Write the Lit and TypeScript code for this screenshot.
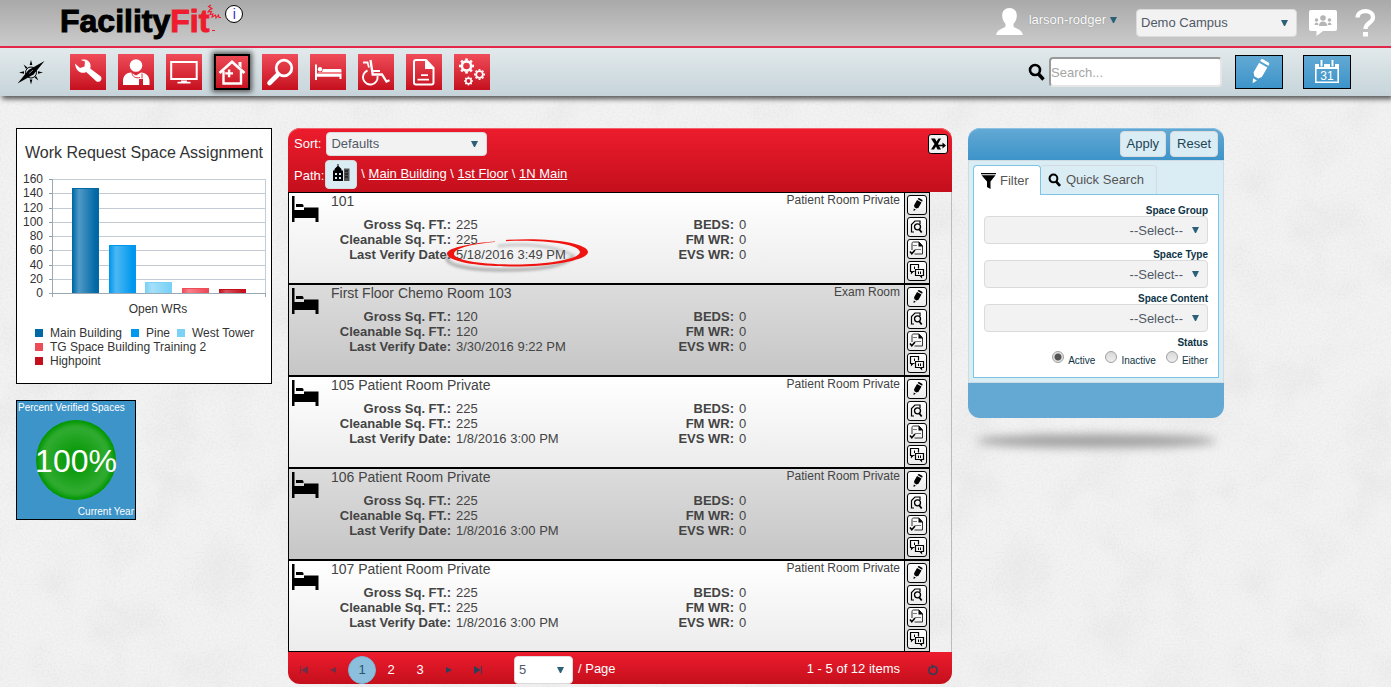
import { LitElement, html, svg, css } from "lit";
import { customElement, property, state } from "lit/decorators.js";
import { classMap } from "lit/directives/class-map.js";

interface Space {
  name: string;
  kind: string;
  sqft: number;
  verified: string;
  marked?: boolean;
}

const SPACES: Space[] = [
  { name: "101", kind: "Patient Room Private", sqft: 225, verified: "5/18/2016 3:49 PM", marked: true },
  { name: "First Floor Chemo Room 103", kind: "Exam Room", sqft: 120, verified: "3/30/2016 9:22 PM" },
  { name: "105 Patient Room Private", kind: "Patient Room Private", sqft: 225, verified: "1/8/2016 3:00 PM" },
  { name: "106 Patient Room Private", kind: "Patient Room Private", sqft: 225, verified: "1/8/2016 3:00 PM" },
  { name: "107 Patient Room Private", kind: "Patient Room Private", sqft: 225, verified: "1/8/2016 3:00 PM" },
];

const SERIES = [
  { name: "Main Building", value: 147, color: "#0069a5", light: "#4f99c6", lx: 18, ly: 208 },
  { name: "Pine", value: 67, color: "#0098ee", light: "#4db7f4", lx: 114, ly: 208 },
  { name: "West Tower", value: 15, color: "#7bd2f6", light: "#a6e0f9", lx: 160, ly: 208 },
  { name: "TG Space Building Training 2", value: 7, color: "#ef4c5a", light: "#f68089", lx: 18, ly: 222 },
  { name: "Highpoint", value: 5, color: "#c4101d", light: "#d5525c", lx: 18, ly: 236 },
];

const pencil = (color: string) => svg`
  <g transform="rotate(30 12 12)" fill=${color}>
    <path d="M9 -1h6.500q1.500 0 1.500 1.500v1.500H7.500v-1.500Q7.500 -1 9 -1z M7.500 4h9.500v11l-2.500 3h-4.500l-2.500-3z M10 20.500h4.500l-2.300 4.500z"/>
  </g>`;

const wrench = svg`<path fill="#fff" d="M5 9.500l5 4.500 4.500-1.500.5-5-4-1.500c4-1.500 9 .5 9.500 5 .2 1.500 0 2.500-.3 3.500l10 7.500c2 1.500 1.500 4-.2 5.300-1.500 1-3.500.7-4.800-1l-9-8.300c-4.500 2.500-10.500-.5-11.200-8.500z"/>`;

const person = svg`
  <circle cx="18" cy="11.500" r="6.300" fill="#fff"/>
  <path fill="#fff" d="M5 31v-4c0-5 3-8 8-8.500l5 3 5-3c5 .5 8.500 3.500 8.500 8.500v4h-6.500v-6h-4v6z"/>
  <path d="M14 19c.5 4 4 5.500 8 4.500m2-4v5" fill="none" stroke="#e1303e" stroke-width="1"/>`;

const monitor = svg`
  <rect x="5.200" y="8" width="25.500" height="17" fill="none" stroke="#fff" stroke-width="2"/>
  <path fill="#fff" d="M15 26.500h6v1.200h3.500v1.800h-13v-1.800H15z"/>`;

const house = svg`
  <path fill="none" stroke="#fff" stroke-width="2.400" stroke-linejoin="miter" d="M9.500 17v12.500h17.500V17"/>
  <path fill="none" stroke="#fff" stroke-width="2.800" d="M5.500 19L18 7.800 30.500 19"/>
  <path fill="#fff" d="M24.500 8h3v6l-3-2.500zM13.900 15.500h2.400v2.700H19v2.400h-2.700v2.700h-2.400v-2.700h-2.700v-2.400h2.700z"/>`;

const magnifier = svg`
  <circle cx="22" cy="14" r="7.800" fill="none" stroke="#fff" stroke-width="2.800"/>
  <path d="M16 20.500L7.500 29" stroke="#fff" stroke-width="4.600" stroke-linecap="round"/>`;

const bedLine = svg`
  <path fill="#fff" d="M5 10.500h2v9h24.500V25h-2v-2.200H7V26H5z"/>
  <circle cx="10" cy="15.200" r="2.200" fill="#fff"/>
  <path fill="#fff" d="M13 15h17c1 0 1.500.5 1.500 1.500v1.500H12z"/>
  <path fill="#f48088" d="M8 18h23.500v1.500H8z"/>`;

const wheelchair = svg`
  <path fill="none" stroke="#fff" stroke-width="2.300" d="M12.500 6l2.200 14.500H24l4.500 7 3-1.200"/>
  <path fill="none" stroke="#fff" stroke-width="1.800" d="M5 8.500h4.500l1.500 5M15 17h7"/>
  <path fill="none" stroke="#fff" stroke-width="1.900" d="M9.500 16.500a7.300 7.300 0 1 0 10 5.500"/>`;

const documentIcon = svg`
  <path fill="none" stroke="#fff" stroke-width="2" stroke-linejoin="round" d="M10 6h10l7.500 8v14.500a2 2 0 0 1-2 2H10a2 2 0 0 1-2-2V8a2 2 0 0 1 2-2z"/>
  <path fill="#fff" d="M19 5.500l9 9.500h-9z"/>
  <path stroke="#fff" stroke-width="1.700" d="M15 21.200h7M11.500 25.700H23"/>`;

const gear = (cx: number, cy: number, r: number, w: number) => svg`
  <circle cx=${cx} cy=${cy} r=${r} fill="none" stroke="#fff" stroke-width=${w}/>
  ${[0, 45, 90, 135, 180, 225, 270, 315].map(
    (a) => svg`<path transform="rotate(${a} ${cx} ${cy})" stroke="#fff" stroke-width=${w} d="M${cx} ${cy - r - w / 2 + 0.3}v${-w * 0.75}"/>`
  )}`;

const gears = svg`${gear(12.5, 12, 4.6, 2.6)}${gear(25.5, 20.5, 3.4, 1.9)}${gear(14.5, 27, 2.7, 1.6)}`;

const MENU = [
  { label: "Work requests", icon: wrench },
  { label: "Staff", icon: person },
  { label: "Equipment", icon: monitor },
  { label: "Spaces", icon: house },
  { label: "Inspections", icon: magnifier },
  { label: "Beds", icon: bedLine },
  { label: "Patient transport", icon: wheelchair },
  { label: "Reports", icon: documentIcon },
  { label: "Settings", icon: gears },
];

const ROW_ACTIONS = [
  { label: "Edit", icon: svg`<g transform="translate(3.500 3.500) scale(.54)">${pencil("#000")}</g>` },
  {
    label: "View",
    icon: svg`
      <path fill="none" stroke="#000" stroke-width="1.200" d="M7 15H4.500V7.500L8 4h5v3"/>
      <circle cx="10.500" cy="9.800" r="3" fill="none" stroke="#000" stroke-width="1.300"/>
      <path stroke="#000" stroke-width="1.800" d="M12 12l2.700 3.500"/>`,
  },
  {
    label: "Inspect",
    icon: svg`
      <path fill="none" stroke="#333" stroke-width="1" d="M5 11V4.500c0-1 .5-1.500 1.500-1.500H12l3.500 3.500V15h-8"/>
      <path fill="#000" d="M11.500 2.500L16 7.500h-4.500z"/>
      <path stroke="#777" stroke-width="1" d="M6 6.500h4M8 10.500h6"/>
      <path fill="none" stroke="#000" stroke-width="1.600" d="M3 12.500l1.800 2.200L8 11"/>`,
  },
  {
    label: "Compare",
    icon: svg`
      <path fill="none" stroke="#000" stroke-width="1.200" d="M7.500 10.500H6L4.500 12v-1.500h-1v-7h8v4"/>
      <path fill="none" stroke="#000" stroke-width="1.200" d="M8.500 8.500h8v6h-2V16l-1.500-1.500H8.500z"/>
      <path stroke="#000" stroke-width="1" d="M7.500 5.500v2.500M11.500 10.500v2.500M13.500 10.500v2.500"/>`,
  },
];

const searchGlyph = (size: number) => html`
  <svg width=${size} height=${size} viewBox="0 0 18 18" aria-hidden="true">
    <circle cx="7" cy="7" r="5" fill="none" stroke="#000" stroke-width="2.600" />
    <path d="M10.500 11l5 5.500" stroke="#000" stroke-width="3.400" />
  </svg>`;

@customElement("space-row")
class SpaceRow extends LitElement {
  @property({ attribute: false }) space!: Space;
  @property({ type: Boolean, reflect: true }) alt = false;

  static styles = css`
    :host {
      display: flex;
      box-sizing: border-box;
      border: 1px solid #000;
      background: linear-gradient(#fff, #ececec);
      color: #444;
      font-size: 13px;
      line-height: 15px;
    }
    :host([alt]) {
      background: linear-gradient(#dcdcdc, #c6c6c6);
    }
    .bed {
      flex: none;
      margin: 3px 12px 0 2px;
    }
    .info {
      flex: 1;
      min-width: 0;
    }
    .head {
      display: flex;
      justify-content: space-between;
      height: 24px;
      padding-right: 4px;
    }
    .name {
      font-size: 14px;
      line-height: 16px;
    }
    .kind {
      font-size: 12px;
      line-height: 14px;
    }
    .stats {
      display: grid;
      grid-template-columns: 120px 1fr 90px 165px;
      column-gap: 5px;
    }
    .key {
      font-weight: bold;
      text-align: right;
      white-space: nowrap;
    }
    .marked {
      position: relative;
    }
    .mark {
      position: absolute;
      left: -14px;
      top: -10px;
      pointer-events: none;
    }
    .actions {
      display: flex;
      flex-direction: column;
      gap: 2px;
      padding: 2px;
      border-left: 1px solid #000;
      background: #dedede;
    }
    button {
      width: 20px;
      height: 20px;
      padding: 0;
      border: 1px solid #000;
      border-radius: 3px;
      background: linear-gradient(#fff, #ececec);
    }
    button svg {
      display: block;
      margin: -1px;
    }
  `;

  render() {
    const s = this.space;
    return html`
      <svg class="bed" width="28" height="28" viewBox="0 0 28 28" aria-hidden="true">
        <path d="M1 0h2.500v14H13v-2.500h14.500V26h-3v-4H3.500v4H1z M5 8h6q1.500 0 1.500 1.500V11H5z" />
      </svg>
      <div class="info">
        <div class="head"><span class="name">${s.name}</span><span class="kind">${s.kind}</span></div>
        <div class="stats">
          <span class="key">Gross Sq. FT.:</span><span>${s.sqft}</span>
          <span class="key">BEDS:</span><span>0</span>
          <span class="key">Cleanable Sq. FT.:</span><span>${s.sqft}</span>
          <span class="key">FM WR:</span><span>0</span>
          <span class="key">Last Verify Date:</span>
          <span class=${classMap({ marked: !!s.marked })}>
            ${s.verified}
            ${s.marked
              ? html`<svg class="mark" width="152" height="40" viewBox="0 0 152 40" aria-hidden="true">
                  <defs><filter id="soft" x="-10%" y="-30%" width="120%" height="160%"><feGaussianBlur stdDeviation="1.600" /></filter></defs>
                  <path d="M6 19C0 27 22 33 62 33c42 0 64-5 70-15" fill="none" stroke="#777" stroke-opacity=".6" stroke-width="3" filter="url(#soft)" />
                  <path d="M56 9c28-3 58 0 74 9" fill="none" stroke="#777" stroke-opacity=".5" stroke-width="2" filter="url(#soft)" />
                  <path fill="#f01410" d="M53 4.500C32 6 6 10 5 16.500c0 8 30 13 67 13 42 0 74-7 74-14.500C146 6 106 0 64 3l0 1.200C101 2.500 137 7 138 15c0 7-32 12.500-65 12.500C38 27.500 12 23 12 17c0-6 21-10.500 41-12z" />
                </svg>`
              : null}
          </span>
          <span class="key">EVS WR:</span><span>0</span>
        </div>
      </div>
      <div class="actions">
        ${ROW_ACTIONS.map(
          (a) => html`<button aria-label="${a.label} ${s.name}"><svg width="20" height="20" viewBox="0 0 20 20">${a.icon}</svg></button>`
        )}
      </div>
    `;
  }
}

@customElement("app-root")
class AppRoot extends LitElement {
  @state() private page = 1;

  static styles = css`
    :host {
      display: block;
      box-sizing: border-box;
      min-height: 100vh;
      font-family: "Liberation Sans", Arial, sans-serif;
      font-size: 13px;
      line-height: 16px;
      color: #444;
      background-color: #f3f3f3;
      background-image: url("data:image/svg+xml,%3Csvg xmlns='http://www.w3.org/2000/svg' width='400' height='400'%3E%3Cfilter id='n' x='0' y='0' width='100%25' height='100%25'%3E%3CfeTurbulence type='fractalNoise' baseFrequency='.5' numOctaves='2' stitchTiles='stitch'/%3E%3CfeColorMatrix values='0 0 0 0 .4 0 0 0 0 .4 0 0 0 0 .4 .22 0 0 0 -.08'/%3E%3C/filter%3E%3Cfilter id='m' x='0' y='0' width='100%25' height='100%25'%3E%3CfeTurbulence type='fractalNoise' baseFrequency='.02' numOctaves='3' seed='4' stitchTiles='stitch'/%3E%3CfeColorMatrix values='0 0 0 0 .4 0 0 0 0 .4 0 0 0 0 .4 .2 0 0 0 -.08'/%3E%3C/filter%3E%3Crect width='400' height='400' filter='url(%23m)'/%3E%3Crect width='400' height='400' filter='url(%23n)'/%3E%3C/svg%3E");
    }
    button,
    select,
    input {
      font: inherit;
    }
    svg {
      display: block;
      flex: none;
    }
    .top {
      display: flex;
      align-items: center;
      height: 46px;
      padding: 0 15px 0 60px;
      border-bottom: 2px solid #ee2549;
      background: linear-gradient(#a9a9a9, #cbcbcb);
    }
    .logo {
      align-self: flex-start;
      display: flex;
      margin-top: 2px;
      color: #000;
      font-size: 32px;
      font-weight: bold;
      line-height: 38px;
      text-decoration: none;
      -webkit-text-stroke: 1px currentColor;
    }
    .fit {
      color: #ee1c2e;
    }
    .squiggle {
      align-self: flex-start;
      margin: 4px 4px 0 -2px;
    }
    .about {
      align-self: flex-start;
      box-sizing: border-box;
      width: 18px;
      height: 18px;
      margin-top: 5px;
      padding: 0;
      border: 1px solid #000;
      border-radius: 50%;
      background: #fff;
      color: #3a2bd0;
      font-size: 14px;
      line-height: 14px;
    }
    .account {
      display: flex;
      align-items: center;
      margin-left: auto;
    }
    .avatar {
      margin-bottom: 4px;
    }
    .user {
      display: flex;
      align-items: center;
      gap: 4px;
      margin: 0 19px 6px 6px;
      padding: 0;
      border: 0;
      background: none;
      color: #fff;
      text-shadow: 0 0 1px #777;
    }
    .icon-link {
      display: block;
      margin-left: 12px;
    }
    .drop {
      box-sizing: border-box;
      appearance: none;
      height: 28px;
      margin: 0;
      padding: 0 4px;
      border: 1px solid #dbdbde;
      border-radius: 4px;
      color: #515967;
      font-weight: normal;
      background: #f2f2f2 url("data:image/svg+xml,%3Csvg xmlns='http://www.w3.org/2000/svg' width='7' height='6'%3E%3Cpath d='M0 0h7l-3 6h-1z' fill='%232a6078'/%3E%3C/svg%3E") no-repeat right 8px center;
    }
    .campus {
      width: 161px;
    }
    .bar {
      position: relative;
      display: flex;
      align-items: center;
      height: 48px;
      padding: 0 40px 0 17px;
      background: linear-gradient(#e2e9eb, #c6d4da);
      box-shadow: 2px 3px 5px #555;
    }
    .menu {
      display: flex;
      gap: 12px;
      margin: 0 auto 0 25px;
    }
    .tile {
      box-sizing: border-box;
      width: 36px;
      height: 36px;
      padding: 0;
      border: 0;
      background: linear-gradient(#f04c59, #c5101e);
    }
    .tile.current {
      outline: 2px solid #000;
      outline-offset: -2px;
      box-shadow: 0 0 5px 2px #555;
    }
    .search {
      display: flex;
      align-items: center;
      gap: 3px;
      margin-right: 13px;
    }
    .search input {
      box-sizing: border-box;
      width: 173px;
      height: 30px;
      padding: 0;
      border: 2px solid;
      border-color: #999 #e6e6e6 #e6e6e6 #999;
      border-radius: 4px;
      background: #fff;
    }
    .search input::placeholder {
      color: #a5a5a5;
    }
    .tool {
      display: grid;
      place-items: center;
      width: 48px;
      height: 34px;
      padding: 0;
      border: 1px solid #000;
      background: linear-gradient(#62a9d4, #3d94c9);
    }
    .tool + .tool {
      margin-left: 20px;
    }
    .tool svg {
      overflow: visible;
    }
    .cal-day {
      font-size: 12px;
      fill: #fff;
    }
    main {
      display: grid;
      grid-template-columns: 256px minmax(560px, 664px) 256px;
      align-items: start;
      gap: 16px;
      padding: 32px 16px 3px;
    }
    .side {
      display: grid;
      justify-items: start;
      gap: 16px;
    }
    .chart {
      box-sizing: border-box;
      width: 256px;
      border: 1px solid #000;
      background: #fff;
      fill: #333;
      font-size: 12px;
    }
    .chart-title {
      font-size: 16px;
    }
    .gauge {
      box-sizing: border-box;
      display: flex;
      flex-direction: column;
      justify-content: space-between;
      width: 120px;
      height: 120px;
      padding: 1px;
      border: 1px solid #000;
      background: #3d94c9;
      color: #fff;
      font-size: 10px;
      line-height: 12px;
    }
    .ball {
      align-self: center;
      width: 80px;
      height: 80px;
      border-radius: 50%;
      background: radial-gradient(circle, #0f9c0f 20%, #2fab2f 55%, #2aa82a 60%, #009600 70%);
      font-size: 32px;
      line-height: 82px;
      display: flex;
      justify-content: center;
    }
    .gauge-foot {
      text-align: right;
    }
    .panel {
      border-radius: 12px;
      box-shadow: inset -1px 0 #bbb;
    }
    .panel-head {
      display: flex;
      justify-content: space-between;
      box-sizing: border-box;
      height: 64px;
      padding: 4px 4px 3px 6px;
      border-radius: 12px 12px 0 0;
      background: linear-gradient(#ed1c2d, #c40f1c);
      box-shadow: inset 0 1px #f3606b;
      color: #fff;
    }
    .sort,
    .path {
      display: flex;
      align-items: center;
    }
    .sort {
      gap: 5px;
      margin-bottom: 4px;
    }
    .sort .drop {
      width: 161px;
      height: 24px;
    }
    .path-label {
      align-self: flex-end;
      line-height: 26px;
    }
    .root {
      display: grid;
      place-items: center;
      width: 32px;
      height: 29px;
      margin: 0 4px 0 1px;
      padding: 0 0 4px;
      border: 1px solid #dbdbde;
      border-radius: 4px;
      background: #daecf4;
    }
    .path a {
      color: #fff;
    }
    .crumbs {
      padding-bottom: 2px;
    }
    .export {
      width: 20px;
      height: 20px;
      margin-top: 2px;
      padding: 0;
      border: 1px solid #000;
      border-radius: 3px;
      background: #f2f2f2;
    }
    .rows {
      display: grid;
      margin-right: 22px;
    }
    .pager {
      display: flex;
      align-items: center;
      box-sizing: border-box;
      height: 32px;
      padding: 2px 12px 0 2px;
      border-radius: 0 0 12px 12px;
      background: linear-gradient(#ed1c2d, #c40f1c);
      color: #fff;
    }
    .pages {
      display: flex;
      gap: 1px;
      margin: 2px 22px 0 0;
    }
    .page {
      display: grid;
      place-items: center;
      width: 28px;
      height: 28px;
      padding: 0;
      border: 0;
      border-radius: 50%;
      background: none;
      color: #fff;
    }
    .page.on {
      border: 1px solid #79b4d4;
      background: #8cbfdd;
      color: #28566c;
    }
    .page:disabled {
      opacity: 0.6;
    }
    .size {
      display: flex;
      align-items: center;
      gap: 5px;
    }
    .size .drop {
      width: 59px;
      margin-top: 2px;
      background-color: #fff;
    }
    .count {
      margin: 0 26px 0 auto;
    }
    .refresh {
      padding: 1px 0 0;
      border: 0;
      background: none;
    }
    .filter-head {
      display: flex;
      justify-content: flex-end;
      gap: 4px;
      padding: 3px 6px;
      border-radius: 12px 12px 0 0;
      background: linear-gradient(#63a9d5, #3d94c9);
      box-shadow: inset 0 1px #8cc1e2;
    }
    .action {
      height: 26px;
      padding: 0 6px;
      border: 1px solid #dbdbde;
      border-radius: 4px;
      background: #daecf4;
      color: #1c4557;
    }
    .filter-body {
      padding: 4px;
      border: 1px solid #cfdbe2;
      background: #daecf4;
    }
    .tabs {
      display: flex;
    }
    .tab {
      display: flex;
      align-items: center;
      box-sizing: border-box;
      height: 29px;
      gap: 4px;
      padding: 0 12px 0 7px;
      border: 1px solid #d3dbdf;
      border-bottom: 0;
      border-left: 0;
      border-radius: 4px 4px 0 0;
      background: none;
      color: #555;
    }
    .tab.open {
      height: 30px;
      margin-bottom: -1px;
      padding-right: 11px;
      border: 1px solid #7bc4e3;
      border-bottom: 0;
      background: #fff;
      position: relative;
    }
    .fields {
      padding: 5px 10px 6px;
      border: 1px solid #7bc4e3;
      background: #fff;
      color: #0d3446;
      font-size: 10px;
      line-height: 11px;
    }
    .field {
      display: block;
      padding-top: 5px;
      font-weight: bold;
      text-align: right;
    }
    .fields .drop {
      display: block;
      width: 100%;
      padding-right: 24px;
      font-size: 13px;
      text-align-last: right;
    }
    .status {
      margin: 0;
      padding: 0;
      border: 0;
    }
    .status legend {
      margin-left: auto;
      padding: 5px 0 0;
      font-weight: bold;
    }
    .choices {
      display: flex;
      justify-content: flex-end;
      gap: 10px;
      padding-top: 3px;
    }
    .choice {
      display: flex;
      align-items: flex-start;
      gap: 4px;
      line-height: 20px;
    }
    .choice input {
      appearance: none;
      box-sizing: border-box;
      width: 12px;
      height: 12px;
      margin: 0;
      border: 1px solid #a0a0a0;
      border-radius: 50%;
      background: linear-gradient(#d8d8d8, #eee);
    }
    .choice input:checked {
      background: radial-gradient(circle, #555 3px, #e2e2e2 4px);
    }
    .filter-foot {
      height: 35px;
      border-radius: 0 0 12px 12px;
      background: #63a9d4;
    }
    .cast {
      height: 14px;
      margin: 16px 8px 0;
      border-radius: 50%;
      background: #a2a2a2;
      filter: blur(5px);
    }
  `;

  private chart() {
    const bottom = 164.5;
    const unit = 114 / 160;
    return html`
      <svg class="chart" viewBox="0 0 254 254" role="img" aria-label="Work Request Space Assignment">
        <defs>
          ${SERIES.map(
            (s, i) => svg`<linearGradient id="bar${i}"><stop offset="0" stop-color=${s.color}/><stop offset=".25" stop-color=${s.light}/><stop offset=".9" stop-color=${s.color}/></linearGradient>`
          )}
        </defs>
        <text class="chart-title" x="127" y="29" text-anchor="middle">Work Request Space Assignment</text>
        ${[0, 20, 40, 60, 80, 100, 120, 140, 160].map((v) => {
          const y = Math.floor(bottom - v * unit) + 0.5;
          return svg`
            <path d="M35 ${y}H249" stroke="#c3ccd4"/>
            <path d="M32 ${y}H36" stroke="#8a9ba8"/>
            <text x="26" y=${y + 3.5} text-anchor="end">${v}</text>`;
        })}
        <path d="M248.500 50V168" fill="none" stroke="#c3ccd4" />
        ${SERIES.map((s, i) => {
          const h = Math.round(s.value * unit);
          return svg`<rect x=${Math.round(55 + i * 36.7) + 0.5} y=${bottom - h} width="26" height=${h} fill="url(#bar${i})" stroke=${s.color}/>`;
        })}
        <path d="M35.500 50V168M32 164.500H249M248.500 164V168" fill="none" stroke="#9aa9b4" />
        <text x="141" y="184" text-anchor="middle">Open WRs</text>
        ${SERIES.map(
          (s) => svg`
            <rect x=${s.lx} y=${s.ly - 8} width="8" height="8" fill=${s.color}/>
            <text x=${s.lx + 15} y=${s.ly}>${s.name}</text>`
        )}
      </svg>
    `;
  }

  private pageButton(n: number) {
    return html`<button class=${classMap({ page: true, on: this.page === n })} @click=${() => (this.page = n)}>${n}</button>`;
  }

  private arrow(label: string, path: string, disabled = false) {
    return html`<button class="page" aria-label=${label} ?disabled=${disabled}>
      <svg width="10" height="8" viewBox="0 0 10 8"><path d=${path} fill="#28415c" /></svg>
    </button>`;
  }

  render() {
    return html`
      <header>
        <div class="top">
          <a class="logo" href="#" aria-label="FacilityFit">
            Facility<span class="fit">Fit</span>
          </a>
          <svg class="squiggle" width="14" height="30" viewBox="0 0 14 30" aria-hidden="true">
            <path d="M4 1l-2.500 1.500L5 4.500 2.500 6 1 8l3.500-.5-1.500 3 3-.5-1 3 3.500-2 .5 3 2.500-3 .5 2.500h2.500" fill="none" stroke="#ee1c2e" stroke-width="1.100" />
            <path d="M5 26.500h3" stroke="#ee1c2e" />
          </svg>
          <button class="about" aria-label="About">i</button>
          <div class="account">
            <svg class="avatar" width="27" height="27" viewBox="0 0 27 27" aria-hidden="true">
              <path fill="#fff" d="M13.500 0c4.500 0 7.500 3 7.300 8-.2 4-1.800 6-3.300 8v2.500c1 2 9 2.500 9.300 8.500H.2c.3-6 8.300-6.500 9.300-8.500V16c-1.500-2-3-4-3.300-8C6 3 9 0 13.500 0z" />
            </svg>
            <button class="user">
              larson-rodger
              <svg width="7" height="6" viewBox="0 0 7 6"><path d="M0 0h7l-3 6h-1z" fill="#2a6078" /></svg>
            </button>
            <select class="drop campus" aria-label="Campus"><option>Demo Campus</option></select>
            <a class="icon-link" href="#" aria-label="Community">
              <svg width="28" height="26" viewBox="0 0 28 26">
                <path fill="#fff" d="M2 0h24q2 0 2 2v17q0 2-2 2H14l-6.500 5V21H2q-2 0-2-2V2Q0 0 2 0z" />
                <g fill="#b5b5b5"><circle cx="7.500" cy="10" r="1.800" /><circle cx="20.500" cy="10" r="1.800" /><circle cx="14" cy="8" r="2.800" />
                <path d="M5.500 15q0-2.500 2-2.500t2 2.500zM18.500 15q0-2.500 2-2.500t2 2.500zM10 16q0-4.500 4-4.500t4 4.500z" /></g>
              </svg>
            </a>
            <a class="icon-link" href="#" aria-label="Help">
              <svg width="27" height="28" viewBox="0 0 27 28">
                <path d="M8.500 8.500C9 0 24 0 24 8.500c0 5.500-7.500 5-7.500 11.500" fill="none" stroke="#fff" stroke-width="4.200" />
                <path d="M14 23h5v4.500h-5z" fill="#fff" />
              </svg>
            </a>
          </div>
        </div>
        <div class="bar">
          <svg width="28" height="24" viewBox="0 0 28 24" aria-hidden="true">
            <circle cx="14" cy="12.500" r="5.500" fill="none" stroke="#000" stroke-width="1" />
            <path d="M14 0l1.300 5h-2.600zM14 24.500l1.300-5h-2.600zM2 12.500l5-1.200v2.400zM26 12.500l-5-1.200v2.400zM6.500 4.500l4 3-1.500 1.500zM21.500 20.500l-4-3 1.500-1.500z" />
            <path d="M27.500 1L16.500 14.500 0.500 23.500 11.500 10z" />
            <path d="M12 13.500l4-3.500" stroke="#9ab" stroke-width=".8" />
          </svg>
          <nav class="menu">
            ${MENU.map(
              (m) => html`<button class=${classMap({ tile: true, current: m.label === "Spaces" })} aria-label=${m.label}>
                <svg width="36" height="36" viewBox="0 0 36 36">${m.icon}</svg>
              </button>`
            )}
          </nav>
          <label class="search">${searchGlyph(18)}<input type="text" placeholder="Search..." aria-label="Search" /></label>
          <button class="tool" aria-label="New request"><svg width="24" height="24" viewBox="0 0 24 24">${pencil("#fff")}</svg></button>
          <button class="tool" aria-label="Calendar">
            <svg width="26" height="26" viewBox="0 0 26 26">
              <path fill="#fff" d="M1 5h24v5H1z" />
              <path fill="none" stroke="#fff" stroke-width="1.600" d="M1.800 5v18.200h22.400V5" />
              <path stroke="#4b9dce" stroke-width="5" d="M7.500 2v6M18.500 2v6" />
              <path stroke="#fff" stroke-width="2" d="M7.500 1v6.500M18.500 1v6.500" />
              <text class="cal-day" x="13" y="21" text-anchor="middle">31</text>
            </svg>
          </button>
        </div>
      </header>

      <main>
        <section class="side">
          ${this.chart()}
          <div class="gauge">
            <span>Percent Verified Spaces</span>
            <span class="ball">100%</span>
            <span class="gauge-foot">Current Year</span>
          </div>
        </section>

        <section class="panel">
          <div class="panel-head">
            <div>
              <label class="sort">Sort:<select class="drop"><option>Defaults</option></select></label>
              <div class="path">
                <span class="path-label">Path:</span>
                <button class="root" aria-label="All buildings">
                  <svg width="17" height="18" viewBox="0 0 17 18">
                    <path d="M4.500 0h1v2l3 3v1.500H10V17H0V6.500h1.500V5l3-3z" />
                    <path d="M11 4.500h5.500V17H11z" fill="#555" />
                    <path d="M2 9h2v2H2zM6 9h2v2H6zM2 13h2v2H2zM6 13h2v2H6z" fill="#daecf4" />
                    <path d="M12 7h3M12 10h3M12 13h3" stroke="#000" />
                  </svg>
                </button>
                <span class="crumbs">\\ <a href="#">Main Building</a> \\ <a href="#">1st Floor</a> \\ <a href="#">1N Main</a></span>
              </div>
            </div>
            <button class="export" aria-label="Export to Excel">
              <svg width="18" height="18" viewBox="0 0 18 18">
                <path d="M2 3.500h4l1.500 3 2-3h2.500L9 9l3 5.500H8.500L7 11.500l-2 3H2L5.500 9z" />
                <path d="M9 9.800h4.500V7.500L17 10.500l-3.500 3v-2.300H9z" />
              </svg>
            </button>
          </div>
          <div class="rows">
            ${SPACES.map((s, i) => html`<space-row .space=${s} ?alt=${i % 2 === 1}></space-row>`)}
          </div>
          <div class="pager">
            <div class="pages">
              ${this.arrow("First page", "M1 0h1v8H1zM9 0v8L2.500 4z", true)}
              ${this.arrow("Previous page", "M8 1v6L2 4z", true)}
              ${[1, 2, 3].map((n) => this.pageButton(n))}
              ${this.arrow("Next page", "M2 1v6l6-3z")}
              ${this.arrow("Last page", "M8 0h1v8H8zM1 0v8l6.500-4z")}
            </div>
            <label class="size"><select class="drop" aria-label="Items per page"><option>5</option></select>/ Page</label>
            <span class="count">1 - 5 of 12 items</span>
            <button class="refresh" aria-label="Refresh">
              <svg width="14" height="12" viewBox="0 0 14 12">
                <path d="M9 2.500a4.200 4.200 0 1 1-4.500.3" fill="none" stroke="#28415c" stroke-width="1.500" />
                <path d="M5.500 0v5l3.500-2.500z" fill="#28415c" />
              </svg>
            </button>
          </div>
        </section>

        <aside>
          <div class="filter-head"><button class="action">Apply</button><button class="action">Reset</button></div>
          <div class="filter-body">
            <div class="tabs">
              <button class="tab open">
                <svg width="15" height="16" viewBox="0 0 15 16"><path d="M0 0h15v1.300H0zM0.500 2.300h14L9.500 8.500V16l-3.500-2V8.500z" /></svg>
                Filter
              </button>
              <button class="tab">${searchGlyph(14)} Quick Search</button>
            </div>
            <div class="fields">
              ${["Space Group", "Space Type", "Space Content"].map(
                (f) => html`<label class="field">${f}<select class="drop"><option>--Select--</option></select></label>`
              )}
              <fieldset class="status">
                <legend>Status</legend>
                <div class="choices">
                  ${["Active", "Inactive", "Either"].map(
                    (c) => html`<label class="choice"><input type="radio" name="status" ?checked=${c === "Active"} />${c}</label>`
                  )}
                </div>
              </fieldset>
            </div>
          </div>
          <div class="filter-foot"></div>
          <div class="cast"></div>
        </aside>
      </main>
    `;
  }
}
